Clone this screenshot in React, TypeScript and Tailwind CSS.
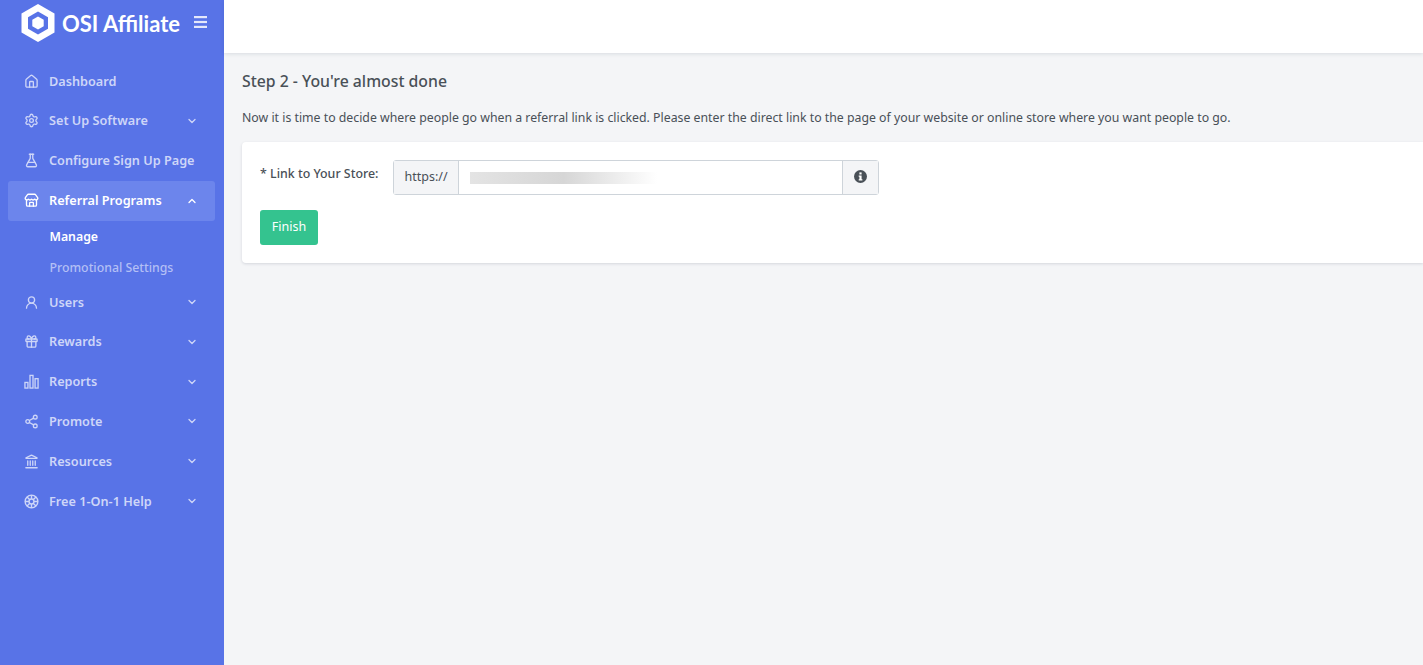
import {
  ChevronDown,
  ChevronUp,
  FlaskConical,
  Gift,
  House,
  Landmark,
  Settings,
  Share2,
  Store,
  UserRound,
} from "lucide-react";
import type { ComponentType } from "react";

type IconProps = { size?: number; strokeWidth?: number; className?: string };

type NavItem = {
  label: string;
  icon: ComponentType<IconProps>;
  chevron?: boolean;
};

function BarsIcon({ size, className }: IconProps) {
  return (
    <svg width={size} height={size} viewBox="0 0 16 16" fill="none" stroke="currentColor" strokeWidth="1.4" className={className}>
      <rect x="1" y="9" width="3.2" height="6" />
      <rect x="6.4" y="1.5" width="3.2" height="13.5" />
      <rect x="11.8" y="5" width="3.2" height="10" />
    </svg>
  );
}

function HelpIcon({ size, className }: IconProps) {
  return (
    <svg width={size} height={size} viewBox="0 0 16 16" fill="none" stroke="currentColor" strokeWidth="1.5" className={className}>
      <circle cx="8" cy="8" r="6.8" />
      <circle cx="8" cy="8" r="2.6" />
      <path d="M8 1.2V5.4M8 10.6v4.2M1.2 8h4.2M10.6 8h4.2M3.2 3.2l3 3M9.8 9.8l3 3M12.8 3.2l-3 3M6.2 9.8l-3 3" />
    </svg>
  );
}

const topItems: NavItem[] = [
  { label: "Dashboard", icon: House },
  { label: "Set Up Software", icon: Settings, chevron: true },
  { label: "Configure Sign Up Page", icon: FlaskConical },
];

const bottomItems: NavItem[] = [
  { label: "Users", icon: UserRound, chevron: true },
  { label: "Rewards", icon: Gift, chevron: true },
  { label: "Reports", icon: BarsIcon, chevron: true },
  { label: "Promote", icon: Share2, chevron: true },
  { label: "Resources", icon: Landmark, chevron: true },
  { label: "Free 1-On-1 Help", icon: HelpIcon, chevron: true },
];

function NavRow({ item }: { item: NavItem }) {
  const Icon = item.icon;
  return (
    <div className="flex h-[39.8px] items-center pl-[16px] pr-[17px] text-[12.7px] font-semibold text-[#ced6f8]">
      <Icon size={15} strokeWidth={2.1} className="mr-[10px] shrink-0" />
      <span className="grow whitespace-nowrap">{item.label}</span>
      {item.chevron && <ChevronDown size={12} strokeWidth={2.6} />}
    </div>
  );
}

function Logo() {
  return (
    <div className="flex h-[46px] items-center pl-[21px]">
      <svg width="34" height="38" viewBox="0 0 34 38" className="shrink-0">
        <path d="M17 0 L33.5 9.5 V28.5 L17 38 L0.5 28.5 V9.5 Z" fill="#fff" />
        <path d="M17 7.5 L27 13.2 V24.8 L17 30.5 L7 24.8 V13.2 Z" fill="#5873e7" />
        <path d="M17 12.5 L22.7 15.8 V22.2 L17 25.5 L11.3 22.2 V15.8 Z" fill="#fff" />
      </svg>
      <span className="ml-[7px] whitespace-nowrap font-['Lato',sans-serif] text-[22px] font-bold text-white">OSI Affiliate</span>
      <svg width="13" height="12" viewBox="0 0 13 12" className="ml-[14px] mb-[3px] text-[#e4e8fb]" fill="currentColor">
        <rect width="13" height="2.2" />
        <rect y="4.9" width="13" height="2.2" />
        <rect y="9.8" width="13" height="2.2" />
      </svg>
    </div>
  );
}

export default function App() {
  return (
    <div className="flex h-[665px] overflow-hidden bg-[#f4f5f7] font-['Noto_Sans',sans-serif]">
      <aside className="w-[224px] shrink-0 bg-[#5873e7]">
        <Logo />
        <nav className="pl-[8px] pr-[9px] pt-[15.2px]">
          {topItems.map((item) => (
            <NavRow key={item.label} item={item} />
          ))}
          <div className="flex h-[40px] items-center rounded-[3px] bg-[#6c85ec] pl-[16px] pr-[17px] text-[12.7px] font-semibold text-white">
            <Store size={15} strokeWidth={2.1} className="mr-[10px] shrink-0" />
            <span className="grow whitespace-nowrap">Referral Programs</span>
            <ChevronUp size={12} strokeWidth={2.6} />
          </div>
          <div className="h-[61.6px] pl-[41.5px] pt-[1px] text-[12.3px]">
            <div className="flex h-[31px] items-center font-semibold text-white">Manage</div>
            <div className="flex h-[31px] items-center font-medium text-[#b3bff5]">Promotional Settings</div>
          </div>
          {bottomItems.map((item) => (
            <NavRow key={item.label} item={item} />
          ))}
        </nav>
      </aside>
      <main className="min-w-0 grow">
        <header className="h-[53px] bg-white shadow-[0_1px_4px_rgba(18,38,63,0.12)]" />
        <div className="pl-[18px] pt-[17px]">
          <h1 className="text-[15.8px] font-medium leading-[22px] text-[#495057]">Step 2 - You're almost done</h1>
          <p className="mt-[16px] whitespace-nowrap text-[12.3px] leading-[20px] text-[#495057]">
            Now it is time to decide where people go when a referral link is clicked. Please enter the direct link to the page of your website or online store where you want people to go.
          </p>
          <section className="mt-[14px] h-[121px] rounded-l-[4px] bg-white pl-[18px] pt-[18px] shadow-[0_1px_3px_rgba(18,38,63,0.14)]">
            <div className="flex items-start">
              <label className="mt-[4px] w-[133px] whitespace-nowrap text-[12.4px] font-medium leading-[20px] text-[#495057]">* Link to Your Store:</label>
              <div className="flex h-[35px] w-[486px] rounded-[3px] border border-[#ced4da]">
                <div className="flex w-[65px] items-center justify-center border-r border-[#ced4da] bg-[#f4f5f7] text-[12.5px] text-[#495057]">https://</div>
                <div className="flex grow items-center pl-[11px]">
                  <div className="h-[12px] w-[187px] bg-gradient-to-r from-[#e4e4e4] via-[#d6d6d6] to-[#ffffff]" />
                </div>
                <div className="flex w-[36px] items-center justify-center border-l border-[#ced4da] bg-[#f4f5f7]">
                  <svg width="13" height="13" viewBox="0 0 13 13" className="mb-[2px]">
                    <circle cx="6.5" cy="6.5" r="6.5" fill="#495057" />
                    <rect x="5.4" y="2.4" width="2.2" height="2.1" fill="#fff" />
                    <path d="M4.7 5.4 H7.6 V9.2 H8.4 V10.6 H4.7 V9.2 H5.4 V6.8 H4.7 Z" fill="#fff" />
                  </svg>
                </div>
              </div>
            </div>
            <button className="mt-[15px] h-[35px] w-[58px] rounded-[3px] bg-[#34c38f] text-[12.5px] text-white">Finish</button>
          </section>
        </div>
      </main>
    </div>
  );
}
